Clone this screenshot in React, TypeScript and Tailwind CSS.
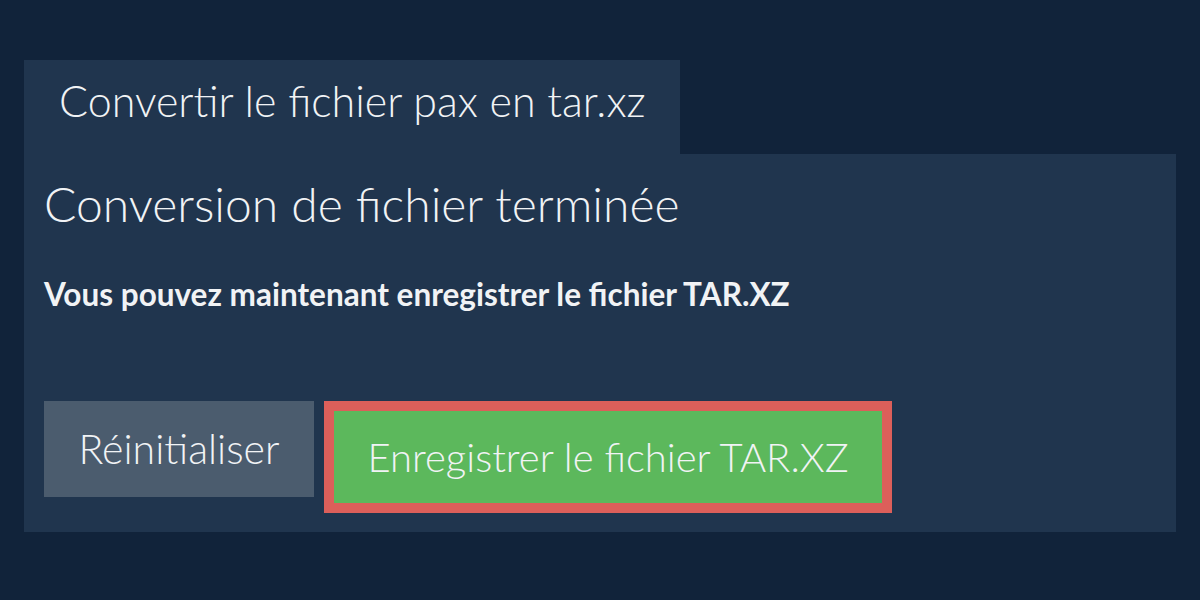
import React from 'react';

const App = () => {
  return (
    <div className="min-h-[600px] w-full bg-[#11233a] px-6 pt-[60px] font-['Lato',sans-serif] text-[#f1f3f5]">
      <div className="h-[94px] w-[656px] bg-[#20354e] pl-[35px] pt-[19px]">
        <h1 className="text-[43px] font-light leading-none">
          Convertir le fichier pax en tar.xz
        </h1>
      </div>
      <div className="flex h-[378px] flex-col bg-[#20354e] px-5 pt-[26px]">
        <h2 className="text-[48px] font-light leading-none">
          Conversion de fichier terminée
        </h2>
        <p className="mt-[51px] text-[31.5px] font-bold leading-none">
          Vous pouvez maintenant enregistrer le fichier TAR.XZ
        </p>
        <div className="mt-auto mb-[19px] flex items-start gap-[10px]">
          <button className="h-24 w-[270px] bg-[#4b5c6e] text-[41px] font-light">
            Réinitialiser
          </button>
          <button className="h-[112px] w-[568px] border-[10px] border-[#dc5f5a] bg-[#5cb85c] text-[40px] font-light">
            Enregistrer le fichier TAR.XZ
          </button>
        </div>
      </div>
    </div>
  );
};

export default App;
